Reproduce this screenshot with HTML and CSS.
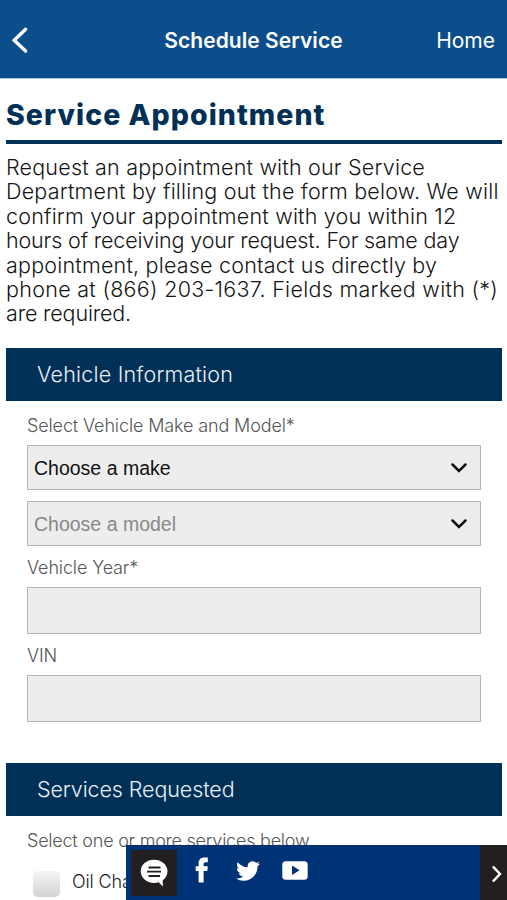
FILE: index.html
```
<!DOCTYPE html>
<html lang="en">
<head>
    <meta charset="UTF-8">
    <meta name="viewport" content="width=device-width, initial-scale=1.0">
    <title>Schedule Service</title>
    <link rel="stylesheet" href="styles.css">
</head>
<body>
    <header class="navbar">
        <a href="#" class="back" aria-label="Back">
            <svg width="18" height="28" viewBox="0 0 18 28"><path d="M14.6 3.2 3.2 14.2 14.6 25" /></svg>
        </a>
        <span class="navbar-title">Schedule Service</span>
        <a href="#" class="home">Home</a>
    </header>

    <main class="container">
        <h1>Service Appointment</h1>
        <p class="intro">
            Request an appointment with our Service<br>
            Department by filling out the form below. We will<br>
            confirm your appointment with you within 12<br>
            <span class="tight">hours of receiving your request. For same day</span><br>
            appointment, please contact us directly by<br>
            <span class="wide">phone at (866) 203-1637. Fields marked with (*)</span><br>
            <span class="tight">are required.</span>
        </p>

        <form id="serviceForm">
            <!-- Vehicle -->
            <h2 class="vehicle-title">Vehicle Information</h2>
            <div class="fields vehicle">
                <label for="make" class="label-make">Select Vehicle Make and Model*</label>
                <div class="select">
                    <select id="make">
                        <option>Choose a make</option>
                    </select>
                    <svg class="arrow" width="18" height="12" viewBox="0 0 18 12"><path d="M2.5 2.5 9 9l6.500-6.500" /></svg>
                </div>
                <div class="select">
                    <select id="model" disabled>
                        <option>Choose a model</option>
                    </select>
                    <svg class="arrow" width="18" height="12" viewBox="0 0 18 12"><path d="M2.5 2.5 9 9l6.500-6.500" /></svg>
                </div>
                <label for="year">Vehicle Year*</label>
                <input type="text" id="year">
                <label for="vin">VIN</label>
                <input type="text" id="vin">
            </div>

            <!-- Services -->
            <h2>Services Requested</h2>
            <div class="fields">
                <p class="hint">Select one or more services below</p>
                <label class="check">
                    <input type="checkbox">
                    <span>Oil Change</span>
                </label>
            </div>
        </form>
    </main>

    <!-- Social bar -->
    <div class="social">
        <a href="#" class="chat" aria-label="Chat">
            <svg width="28" height="28" viewBox="0 0 28 28">
                <path class="fill" d="M14 .8C6.600.8.700 5.700.700 12.300S6.600 24 14 24c1.700 0 3.300-.3 4.800-.8 1.400 1.700 2.700 3.100 4.500 4-.6-2-.7-3.800-.5-5.900 3-2.200 4.700-5.300 4.700-9C27.500 5.700 21.400.8 14 .8z" />
                <path class="lines" d="M8.500 8.500h12M7 12.700h14M8.500 17h11.500" />
            </svg>
        </a>
        <a href="#" class="facebook" aria-label="Facebook">
            <svg width="14" height="26" viewBox="0 0 14 26"><path class="fill" d="M3.600 25.500V14H.7V9.300h2.900V6.600C3.600 2.700 5.700.6 9.300.6h3.500v4.600h-2.200c-1.500 0-2 .7-2 2v2.100h4.200l-.5 4.700H8.600v11.500z" /></svg>
        </a>
        <a href="#" class="twitter" aria-label="Twitter">
            <svg width="24" height="20" viewBox="0 2 24 20"><path class="fill" d="M23.950 4.570a10 10 0 0 1-2.820.780 4.960 4.960 0 0 0 2.160-2.720c-.95.55-2 .96-3.130 1.180a4.920 4.920 0 0 0-8.380 4.480C7.690 8.090 4.070 6.130 1.640 3.160a4.820 4.820 0 0 0-.67 2.480c0 1.700.87 3.210 2.190 4.090a4.900 4.900 0 0 1-2.230-.61v.06a4.920 4.920 0 0 0 3.950 4.830 5 5 0 0 1-2.210.08 4.940 4.940 0 0 0 4.600 3.420A9.870 9.870 0 0 1 0 19.540a13.990 13.990 0 0 0 7.550 2.210c9.050 0 14-7.500 14-13.980 0-.21 0-.42-.02-.63a9.940 9.940 0 0 0 2.460-2.550z" /></svg>
        </a>
        <a href="#" class="youtube" aria-label="YouTube">
            <svg width="26" height="19" viewBox="0 0 26 19">
                <rect class="fill" x=".3" y=".3" width="25.400" height="18.400" rx="3.500" />
                <path class="play" d="M10 4.500v9.500l7.500-4.700z" />
            </svg>
        </a>
        <button type="button" class="next" aria-label="Next">
            <svg width="12" height="18" viewBox="0 0 12 18"><path d="M2.500 2.200 9 9 2.500 15.800" /></svg>
        </button>
    </div>
</body>
</html>
```
FILE: styles.css
```
* {
    box-sizing: border-box;
}
body {
    font-family: Inter, "Open Sans", sans-serif;
    margin: 0;
    height: 900px;
    overflow: hidden;
    background: white;
    color: #151515;
}
svg {
    display: block;
    fill: none;
}
a {
    color: white;
    text-decoration: none;
}
.navbar {
    display: grid;
    grid-template-columns: 94px 1fr 94px;
    align-items: center;
    height: 79px;
    padding: 1px 12px 0 11px;
    background: #0c4d8c;
    border-bottom: 1px solid #a9c5e0;
    color: white;
}
.back svg {
    stroke: white;
    stroke-width: 3.4;
    stroke-linecap: round;
}
.navbar-title {
    padding: 1px 0 0 1px;
    text-align: center;
    font-size: 21px;
    font-weight: 600;
    letter-spacing: 0.05px;
}
.home {
    padding-top: 2px;
    text-align: right;
    font-size: 21px;
}
.container {
    padding: 0 5px 0 6px;
}
h1 {
    height: 65px;
    margin: 0 0 11px;
    padding-top: 19px;
    border-bottom: 4px solid #003056;
    font-size: 28.5px;
    line-height: 34px;
    font-weight: 800;
    letter-spacing: 1.04px;
    color: #003056;
}
.intro {
    margin: 0 0 22px;
    font-size: 21.5px;
    line-height: 24.4px;
    font-weight: 340;
    letter-spacing: 0.2px;
    white-space: nowrap;
}
.tight {
    letter-spacing: -0.15px;
}
.wide {
    letter-spacing: 0.29px;
}
h2 {
    height: 53px;
    margin: 0;
    padding-left: 31px;
    background: #003056;
    color: #e8f0f8;
    font-size: 21.5px;
    line-height: 53px;
    font-weight: 300;
    letter-spacing: -0.1px;
}
.vehicle-title {
    letter-spacing: 0.2px;
}
.fields {
    height: 84px;
    padding: 0 21px;
}
.vehicle {
    height: 362px;
}
.fields > label,
.hint {
    display: block;
    height: 41px;
    margin: 0;
    font-size: 18px;
    line-height: 43px;
    font-weight: 320;
    letter-spacing: -0.13px;
    color: #555;
}
.fields > .label-make {
    height: 44px;
    line-height: 50px;
}
.select {
    display: grid;
    grid-template-columns: 1fr 30px;
    align-items: center;
    height: 45px;
    margin-bottom: 11px;
    border: 1px solid #b5b5b5;
    background: #ededed;
}
.select + label {
    margin-top: -11px;
}
select {
    appearance: none;
    border: none;
    padding: 2px 0 0 6px;
    background: transparent;
    font-family: "Liberation Sans", Arial, sans-serif;
    font-size: 19.5px;
    color: #111;
}
select:disabled {
    color: #888;
    opacity: 1;
}
.arrow {
    margin-top: 1px;
    stroke: #111;
    stroke-width: 2.5;
    stroke-linecap: round;
}
input[type="text"] {
    display: block;
    width: 100%;
    height: 47px;
    border: 1px solid #b5b5b5;
    border-radius: 0;
    background: #ededed;
}
.fields > .hint {
    height: 50px;
    line-height: 50px;
    letter-spacing: -0.23px;
}
.fields > .check {
    display: flex;
    gap: 12px;
    height: 34px;
    padding-left: 6px;
    line-height: 32px;
    color: #1c1c1c;
}
input[type="checkbox"] {
    appearance: none;
    width: 27px;
    height: 26px;
    margin: 5px 0 0;
    border-radius: 5px;
    background: linear-gradient(#f6f6f6, #d2d2d2);
}
.social {
    position: fixed;
    right: 0;
    bottom: 0;
    display: flex;
    width: 381px;
    height: 55px;
    background: #003276;
}
.chat {
    width: 46px;
    height: 46px;
    margin: 5px 0 0 5px;
    padding: 9px 0 0 9px;
    background: #231f20;
}
.fill {
    fill: white;
}
.lines {
    stroke: #231f20;
    stroke-width: 1.8;
}
.facebook {
    margin: 12px 0 0 18px;
}
.twitter {
    margin: 16px 0 0 27px;
}
.youtube {
    margin: 16px 0 0 22px;
}
.play {
    fill: #003276;
}
.next {
    width: 27px;
    margin-left: auto;
    padding: 3px 0 0 11px;
    border: none;
    background: #231f20;
}
.next svg {
    stroke: white;
    stroke-width: 2.4;
    stroke-linecap: round;
}
```
